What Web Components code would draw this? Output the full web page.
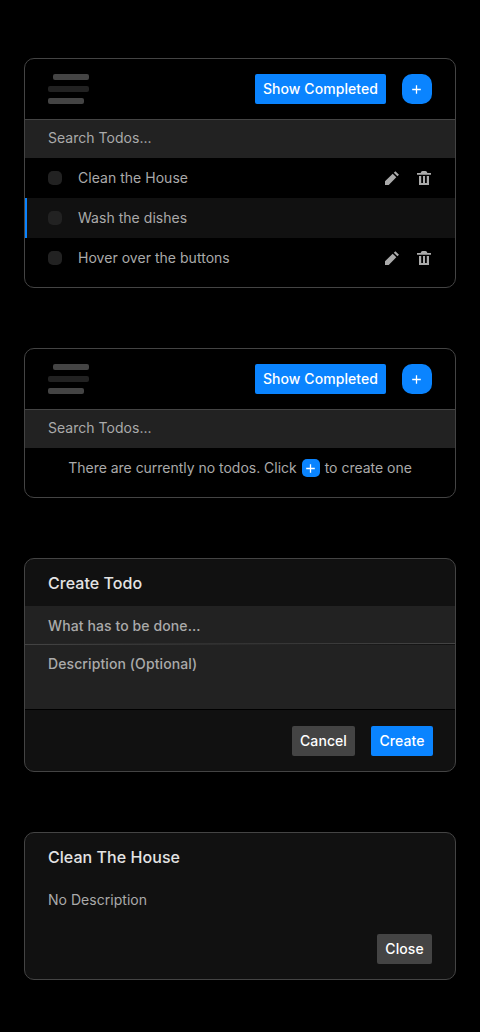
<!DOCTYPE html>
<html lang="en">
<head>
<meta charset="utf-8">
<title>Todos</title>
<style>
body { margin: 0; background: #000; color: #aaa; font: 400 14px/20px Inter, "Liberation Sans", sans-serif; letter-spacing: 0.03px; }
</style>
</head>
<body>
<todo-app></todo-app>
<script>
const define = (name, html) => {
  const template = document.createElement('template');
  template.innerHTML = '<style>*{box-sizing:border-box}</style>' + html;
  customElements.define(name, class extends HTMLElement {
    constructor() {
      super();
      this.attachShadow({ mode: 'open' }).append(template.content.cloneNode(true));
    }
  });
};

define('todo-card', `<style>
:host { display: flex; flex-direction: column; box-sizing: border-box; border: 1px solid #444; border-radius: 10px; overflow: hidden; background: #000; }
:host([raised]) { background: #111; }
</style><slot></slot>`);

define('todo-button', `<style>
:host { display: block; flex: none; box-sizing: border-box; height: 30px; border-radius: 2px; background: #0a84ff; color: #fff; font-weight: 500; line-height: 30px; letter-spacing: 0.08px; text-align: center; white-space: nowrap; }
:host([muted]) { background: #444; }
</style><slot></slot>`);

define('add-button', `<style>
:host { display: inline-flex; flex: none; align-items: center; justify-content: center; box-sizing: border-box; width: 30px; height: 30px; padding: 1px 1px 0 0; border-radius: 10px; background: #0a84ff; color: #fff; }
:host([small]) { width: 18px; height: 18px; border-radius: 5px; }
svg { display: block; width: 9px; height: 9px; }
</style><svg viewBox="0 0 9 9"><path d="M4.5 0.2v8.6M0.2 4.5h8.6" stroke="currentColor" stroke-width="1.3"/></svg>`);

define('todo-logo', `<style>
:host { display: flex; flex-direction: column; gap: 6px; width: 41px; }
i { display: block; width: 36px; height: 6px; border-radius: 2px; background: #444; }
i:nth-of-type(1) { align-self: flex-end; }
i:nth-of-type(2) { width: 41px; background: #222; }
</style><i></i><i></i><i></i>`);

define('todo-header', `<style>
:host { display: flex; align-items: center; gap: 16px; height: 61px; padding: 0 23px; border-bottom: 1px solid #444; box-sizing: border-box; }
todo-logo { margin-right: auto; }
todo-button { width: 131px; }
</style><todo-logo></todo-logo><todo-button>Show Completed</todo-button><add-button></add-button>`);

define('search-field', `<style>
:host { display: block; height: 38px; padding: 0 23px; box-sizing: border-box; background: #222; line-height: 36px; }
</style><slot></slot>`);

define('todo-item', `<style>
:host { display: flex; align-items: center; height: 40px; padding: 0 24px 0 23px; box-sizing: border-box; }
:host([active]) { background: #111; border-left: 2px solid #0a84ff; padding-left: 21px; }
:host([active]) svg { display: none; }
i { width: 14px; height: 14px; border-radius: 5px; background: #222; margin-right: 16px; }
span { flex: 1; }
svg { width: 14px; height: 14px; fill: #aaa; margin-left: 18px; }
</style><i></i><span><slot></slot></span>
<svg viewBox="0 0 14 14"><path d="M0 14v-3.8L7.7 2.7 11.3 6.3 3.7 14zM8.8 1.7 10.4 0.2 14 3.7 12.4 5.3z"/></svg>
<svg viewBox="0 0 14 14"><path d="M0 2h3.600Q4.200 0 5.500 0h3Q9.800 0 10.400 2H14v1.800H0zM2 5h2.200v7H6V5h2v7h1.800V5H12v9H2z"/></svg>`);

define('empty-note', `<style>
:host { display: flex; align-items: center; justify-content: center; height: 40px; white-space: pre; letter-spacing: -0.02px; }
add-button { margin: 0 5px; }
</style><span>There are currently no todos. Click</span><add-button small></add-button><span>to create one</span>`);

define('dialog-title', `<style>
:host { display: block; height: 47px; padding: 1px 23px 0; box-sizing: border-box; color: #e4e4e4; font-size: 16px; font-weight: 500; line-height: 47px; letter-spacing: 0.05px; }
</style><slot></slot>`);

define('form-field', `<style>
:host { display: block; height: 38px; padding: 0 23px; box-sizing: border-box; background: #222; font-weight: 500; line-height: 40px; letter-spacing: 0.1px; }
:host([multiline]) { height: 66px; border-bottom: 1px solid #000; line-height: 38px; }
</style><slot></slot>`);

define('dialog-actions', `<style>
:host { display: flex; justify-content: flex-end; gap: 16px; padding: 16px 22px 15px; }
</style><slot></slot>`);

define('todo-app', `<style>
:host { display: flex; flex-direction: column; gap: 60px; box-sizing: border-box; height: 1032px; padding: 58px 24px 0; }
.list { height: 230px; } .empty { height: 150px; } .create { height: 214px; } .detail { height: 148px; }
.rule { flex: none; display: grid; height: 2px; margin-top: -1px; grid-template-rows: 1px 1px; }
.rule i:first-child { background: linear-gradient(90deg, #222, #444); }
.rule i:last-child { background: linear-gradient(90deg, #444, #222 65%, #111); }
.desc { padding: 10px 23px 24px; }
.detail dialog-actions { padding: 0 23px; }
</style>
<todo-card class="list"><todo-header></todo-header><search-field>Search Todos...</search-field>
<todo-item>Clean the House</todo-item><todo-item active>Wash the dishes</todo-item><todo-item>Hover over the buttons</todo-item></todo-card>
<todo-card class="empty"><todo-header></todo-header><search-field>Search Todos...</search-field><empty-note></empty-note></todo-card>
<todo-card class="create" raised><dialog-title>Create Todo</dialog-title><form-field>What has to be done...</form-field><div class="rule"><i></i><i></i></div><form-field multiline>Description (Optional)</form-field>
<dialog-actions><todo-button muted style="width:63px">Cancel</todo-button><todo-button style="width:62px">Create</todo-button></dialog-actions></todo-card>
<todo-card class="detail" raised><dialog-title>Clean The House</dialog-title><div class="desc">No Description</div><dialog-actions><todo-button muted style="width:55px">Close</todo-button></dialog-actions></todo-card>`);
</script>
</body>
</html>
